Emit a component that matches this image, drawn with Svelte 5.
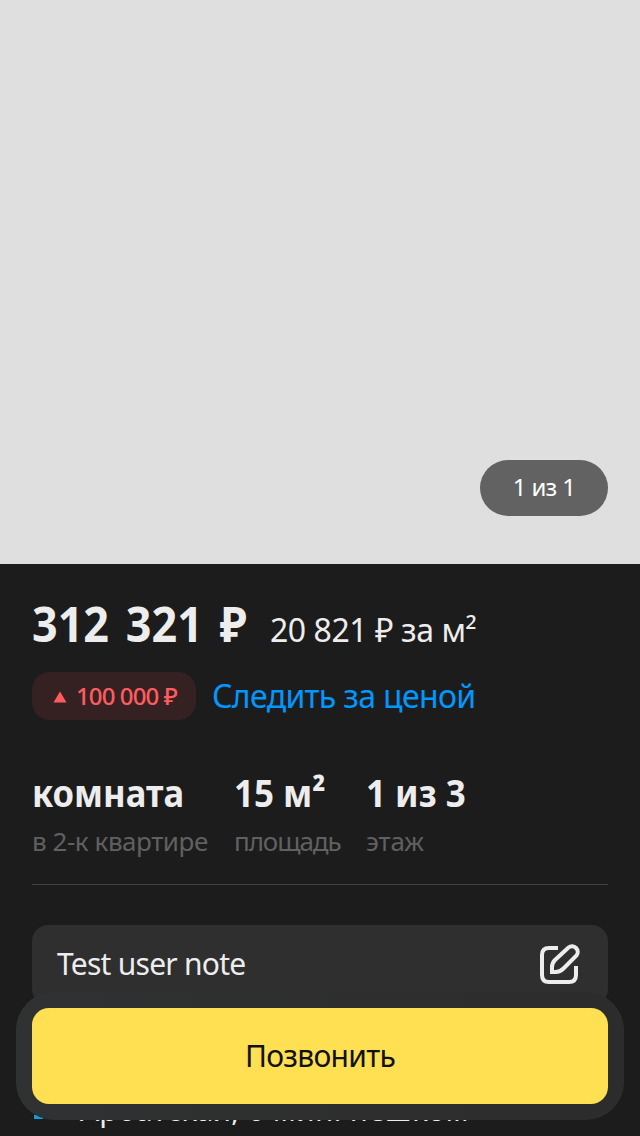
<script>
  const facts = [
    { value: 'комната', label: 'в 2-к квартире', name: 'room' },
    { value: '15 м²', label: 'площадь', name: 'area' },
    { value: '1 из 3', label: 'этаж', name: 'floor' }
  ];
</script>

<main class="screen">
  <div class="photo"><span class="counter">1 из 1</span></div>
  <section class="content">
    <div class="price-row">
      <h1 class="price">312 321 ₽</h1>
      <span class="per-meter">20 821 ₽ за м²</span>
    </div>
    <div class="trend-row">
      <span class="trend">
        <svg width="14" height="12" viewBox="0 0 14 12"><path d="M7 .5 13.5 11.5H.5Z" fill="#ff5c60" /></svg>
        <span class="amount">100 000 ₽</span>
      </span>
      <a class="follow" href="#follow">Следить за ценой</a>
    </div>
    <div class="facts">
      {#each facts as fact}
        <div class="fact {fact.name}">
          <strong>{fact.value}</strong>
          <span>{fact.label}</span>
        </div>
      {/each}
    </div>
    <div class="note">
      <span class="note-text">Test user note</span>
      <svg width="42" height="42" viewBox="0 0 42 42" fill="none" stroke="#ededed" stroke-width="4">
        <path d="M19 5H10Q3 5 3 12V32Q3 39 10 39H30Q37 39 37 32V23" />
        <path d="M13 29V24Q13 20 16 17L29.5 4.5A5.7 5.7 0 0 1 37.5 12.5L24.5 25.5Q21 29 17 29Z" />
      </svg>
    </div>
    <div class="metro">
      <svg width="28" height="20" viewBox="0 0 28 20"><path d="M2 20V16H4L9 2 14 11 19 2 24 16H26V20H17V16H18L17 12 14 17 11 12 10 16H11V20Z" fill="#0c9fdb" /></svg>
      <span class="station">Арбатская, 6 мин. пешком</span>
    </div>
  </section>
  <div class="call-panel"><button class="call"><span>Позвонить</span></button></div>
</main>

<style>
  :global(body) { margin: 0; background: #1c1c1c; }
  .screen {
    position: relative;
    width: 640px;
    height: 1136px;
    overflow: hidden;
    background: #1c1c1c;
    color: #ededed;
    font-family: "Noto Sans", "Open Sans", sans-serif;
    white-space: nowrap;
  }
  .photo {
    box-sizing: border-box;
    height: 564px;
    padding: 0 32px 48px;
    display: flex;
    align-items: flex-end;
    justify-content: flex-end;
    background: #dfdfdf;
  }
  .counter {
    width: 128px;
    height: 56px;
    border-radius: 28px;
    background: #626262;
    color: #fff;
    font-size: 24px;
    line-height: 54px;
    letter-spacing: -0.7px;
    text-align: center;
  }
  .content { padding: 30px 32px 0; }
  .price-row { display: flex; height: 60px; align-items: baseline; }
  .price {
    margin: 0;
    width: 238px;
    font-size: 48px;
    line-height: 60px;
    font-weight: 700;
    word-spacing: 5.5px;
    transform: scaleX(0.935);
    transform-origin: left;
  }
  .per-meter { font-size: 32px; line-height: 60px; letter-spacing: -0.45px; }
  .trend-row { display: flex; height: 48px; margin-top: 18px; gap: 16px; align-items: center; }
  .trend {
    box-sizing: border-box;
    width: 164px;
    height: 48px;
    padding-left: 21px;
    border-radius: 18px;
    background: #362122;
    color: #ff5c60;
    display: flex;
    align-items: center;
    gap: 9px;
    font-size: 24px;
    font-weight: 500;
    line-height: 46px;
    letter-spacing: -0.9px;
  }
  .trend svg { margin-top: 2px; }
  .follow { color: #0098ff; text-decoration: none; font-size: 32px; line-height: 48px; letter-spacing: -0.65px; }
  .facts {
    display: flex;
    box-sizing: border-box;
    height: 165px;
    padding-top: 46px;
    border-bottom: 1px solid #404040;
  }
  .fact { display: flex; flex-direction: column; }
  .room { width: 202px; }
  .area { width: 132px; }
  .fact strong {
    font-size: 38px;
    line-height: 52px;
    font-weight: 700;
    transform: scaleX(0.92);
    transform-origin: left;
  }
  .room strong { transform: scaleX(0.91); }
  .fact span { font-size: 26px; line-height: 36px; margin-top: 5px; color: #606060; letter-spacing: -0.45px; }
  .area span { letter-spacing: -1.1px; }
  .floor span { letter-spacing: -0.1px; }
  .note {
    box-sizing: border-box;
    height: 80px;
    margin-top: 40px;
    padding: 0 27px 3px 25px;
    border-radius: 16px;
    background: #2f2f2f;
    display: flex;
    align-items: center;
    justify-content: space-between;
    font-size: 30px;
    letter-spacing: -0.75px;
  }
  .metro { display: flex; height: 44px; margin-top: 83px; gap: 20px; align-items: flex-start; }
  .metro svg { margin-top: 11px; }
  .station { font-size: 30px; line-height: 44px; letter-spacing: 0.2px; }
  .call-panel {
    box-sizing: border-box;
    position: absolute;
    left: 16px;
    top: 992px;
    width: 608px;
    height: 128px;
    padding: 16px;
    border-radius: 38px;
    background: linear-gradient(90deg, #303132, #2c2c2c);
  }
  .call {
    width: 100%;
    height: 96px;
    padding: 0 0 2px;
    border: 0;
    border-radius: 17px;
    background: #ffe052;
    color: #111;
    font: 30px "Noto Sans", sans-serif;
    letter-spacing: -0.7px;
  }
</style>
